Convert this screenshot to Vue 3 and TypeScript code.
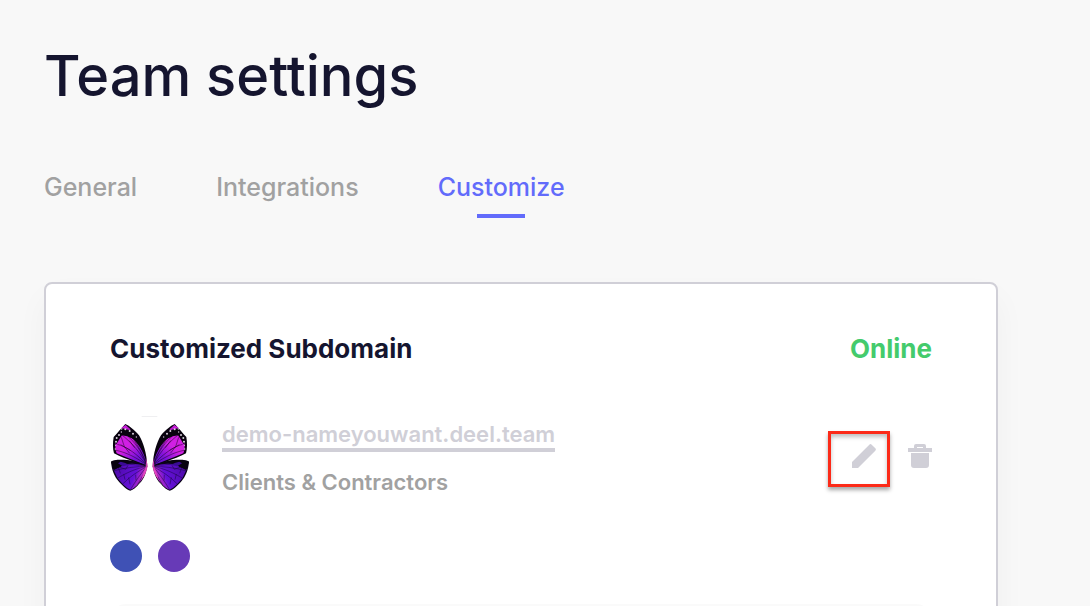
<script setup lang="ts">
interface Tab {
  label: string
  active: boolean
}

const tabs: Tab[] = [
  { label: 'General', active: false },
  { label: 'Integrations', active: false },
  { label: 'Customize', active: true },
]

const swatches: string[] = ['#3f51b5', '#673ab7']
</script>

<template>
  <main class="page">
    <h1 class="title">Team settings</h1>

    <nav class="tabs" aria-label="Team settings sections">
      <a v-for="tab in tabs" :key="tab.label" href="#" class="tab" :class="{ active: tab.active }">{{ tab.label }}</a>
    </nav>

    <section class="card">
      <header class="card-head">
        <h2 class="card-title">Customized Subdomain</h2>
        <span class="status">Online</span>
      </header>

      <div class="row">
        <svg class="logo" viewBox="30 33 240 240" aria-hidden="true">
          <defs>
            <linearGradient id="upper" x1="0.1" y1="0" x2="0.8" y2="1">
              <stop offset="0" stop-color="#d01ee0" />
              <stop offset="0.5" stop-color="#d020e4" />
              <stop offset="0.8" stop-color="#7a12d8" />
              <stop offset="1" stop-color="#5a14c8" />
            </linearGradient>
            <linearGradient id="lower" x1="0" y1="0.2" x2="1" y2="0.5">
              <stop offset="0" stop-color="#4c0aa6" />
              <stop offset="0.65" stop-color="#6410d8" />
              <stop offset="1" stop-color="#f03fc0" />
            </linearGradient>
            <g id="wing">
              <path d="M76 57C86 61 104 75 117 91C130 112 140 145 142 183C132 182 119 179 104 172C82 162 58 154 42 145C38 132 38 112 41 96C52 84 64 70 76 57Z" fill="#09030f" />
              <path d="M64 69L77 60L91 73L82 80L71 78ZM64 90C78 89 91 95 103 106C119 122 136 151 141 181C123 176 95 163 50 145C45 132 45 119 48 110Z" fill="url(#upper)" />
              <path d="M66 90C82 103 119 135 140 180M52 118C80 124 116 151 140 180M48 136C80 142 113 160 140 180M83 93C101 109 125 136 140 180M101 104C116 124 131 151 140 180M64 97L73 125L89 145M62 119L91 136M88 107L104 128" fill="none" stroke="#16051f" stroke-width="2" opacity="0.75" />
              <path d="M68 70L91 76L110 92L117 109L100 101L82 94L66 91L58 103L49 118L43 104L46 94Z" fill="#09030f" />
              <path d="M73 64L84 73L92 75L82 66Z" fill="#b31bc9" />
              <g fill="#d8d0dc">
                <circle cx="65" cy="72" r="2" />
                <circle cx="76" cy="73" r="3" />
                <circle cx="89" cy="78" r="3" />
                <circle cx="99" cy="86" r="3" />
                <circle cx="109" cy="96" r="2" />
                <circle cx="64" cy="81" r="2" />
                <circle cx="57" cy="90" r="3" />
                <circle cx="50" cy="99" r="3" />
                <circle cx="48" cy="110" r="3" />
                <circle cx="47" cy="121" r="2" />
                <circle cx="46" cy="132" r="2" />
              </g>
              <path d="M33 170C43 162 77 164 99 168C117 173 134 177 142 184C139 201 132 224 119 235C110 246 99 256 91 257C80 254 67 242 55 228C44 215 35 195 33 170Z" fill="#0b0418" />
              <path d="M60 185C76 174 108 172 141 185C137 207 128 222 117 234C108 245 98 253 91 254C78 248 62 232 52 218L40 193Z" fill="url(#lower)" />
              <path d="M141 184C112 184 77 188 42 197M141 184C108 190 76 205 52 220M141 184C114 199 88 216 68 237M141 184C123 205 105 231 91 254M141 184C132 207 121 225 113 238M61 176C78 177 110 179 141 184M61 205L54 185L77 193L84 181M75 224L71 207M90 238L86 217M108 226L107 209" fill="none" stroke="#16063c" stroke-width="2" opacity="0.75" />
              <path d="M33 170C45 163 76 164 98 169L76 175L62 185L42 195Z" fill="#08030f" />
              <path d="M54 175L62 170L76 174L86 180L68 184Z" fill="#3a0b95" />
              <path d="M139 160L143 184C140 200 134 213 125 222C127 209 132 198 137 185Z" fill="#f64fc8" opacity="0.8" />
            </g>
          </defs>
          <path d="M125 34H172" stroke="#ececee" stroke-width="3" />
          <use href="#wing" />
          <use href="#wing" transform="matrix(-1 0 0 1 300 0)" />
        </svg>

        <div class="details">
          <a href="#" class="domain">demo-nameyouwant.deel.team</a>
          <span class="audience">Clients &amp; Contractors</span>
        </div>

        <div class="actions">
          <button type="button" class="action edit" aria-label="Edit subdomain">
            <svg width="24" height="24" viewBox="0 0 24 24" aria-hidden="true">
              <path d="M0 24V18L17.3 .7Q18.5 -.5 19.7 .7L23.3 4.3Q24.5 5.5 23.3 6.7L6 24Z" fill="#d0cfd7" />
            </svg>
          </button>
          <button type="button" class="action" aria-label="Delete subdomain">
            <svg width="24" height="24" viewBox="0 0 24 24" aria-hidden="true">
              <path d="M0 4H6V2Q6 0 8 0H16Q18 0 18 2V4H24V8H0ZM9 3V4H15V3ZM3 9H21V21Q21 24 18 24H6Q3 24 3 21Z" fill="#d0cfd7" fill-rule="evenodd" />
            </svg>
          </button>
        </div>
      </div>

      <ul class="swatches">
        <li v-for="color in swatches" :key="color" class="swatch" :style="{ backgroundColor: color }"></li>
      </ul>

      <div class="preview"></div>
    </section>
  </main>
</template>

<style>
body {
  margin: 0;
  background: #f8f8f8;
}
</style>

<style scoped>
.page {
  box-sizing: border-box;
  display: flex;
  flex-direction: column;
  height: 100vh;
  padding: 40px 92px 0 44px;
  overflow: hidden;
  font-family: Inter, "Liberation Sans", sans-serif;
  font-weight: 500;
  color: #15152f;
}

.title {
  margin: 0;
  font-size: 56px;
  font-weight: 500;
  line-height: 72px;
}

.tabs {
  display: flex;
  gap: 79px;
  margin-top: 56px;
}

.tab {
  display: flex;
  flex-direction: column;
  align-items: center;
  font-size: 25px;
  line-height: 38px;
  color: #a1a1a1;
  text-decoration: none;
}

.tab.active {
  color: #626bfb;
}

.tab.active::after {
  width: 48px;
  height: 4px;
  margin-top: 8px;
  background: #626bfb;
  content: "";
}

.card {
  flex-shrink: 0;
  margin-top: 64px;
  padding: 48px 64px;
  border: 2px solid #d0cfd7;
  border-radius: 8px;
  background: #fff;
  box-shadow: 0 16px 32px rgba(0, 0, 0, 0.04);
}

.card-head {
  display: flex;
  justify-content: space-between;
  line-height: 34px;
}

.card-title,
.status {
  margin: 0;
  font-size: 26px;
  font-weight: 700;
}

.status {
  color: #44cb6c;
}

.row {
  display: flex;
  align-items: center;
  margin-top: 50px;
}

.logo {
  width: 80px;
  height: 80px;
}

.details {
  display: flex;
  flex-direction: column;
  align-items: flex-start;
  gap: 16px;
  margin-left: 32px;
  padding-top: 4px;
  font-size: 22px;
  font-weight: 600;
  line-height: 28px;
}

.domain {
  border-bottom: 4px solid #d0cfd7;
  color: #d0cfd7;
  text-decoration: none;
}

.audience {
  color: #a1a1a1;
}

.actions {
  display: flex;
  align-items: center;
  gap: 18px;
  margin-left: auto;
}

.action {
  display: flex;
  padding: 0;
  border: 0;
  background: none;
}

.edit {
  margin-top: 6px;
  padding: 10px 11px 16px 21px;
  border: 3px solid #fc2a18;
  box-shadow: 0 3px 4px rgba(0, 0, 0, 0.35), inset 0 3px 4px rgba(0, 0, 0, 0.25);
}

.swatches {
  display: flex;
  gap: 16px;
  margin: 44px 0 0;
  padding: 0;
  list-style: none;
}

.swatch {
  width: 32px;
  height: 32px;
  border-radius: 50%;
}

.preview {
  height: 160px;
  margin-top: 32px;
  border-radius: 16px;
  background: #fafafa;
}
</style>
